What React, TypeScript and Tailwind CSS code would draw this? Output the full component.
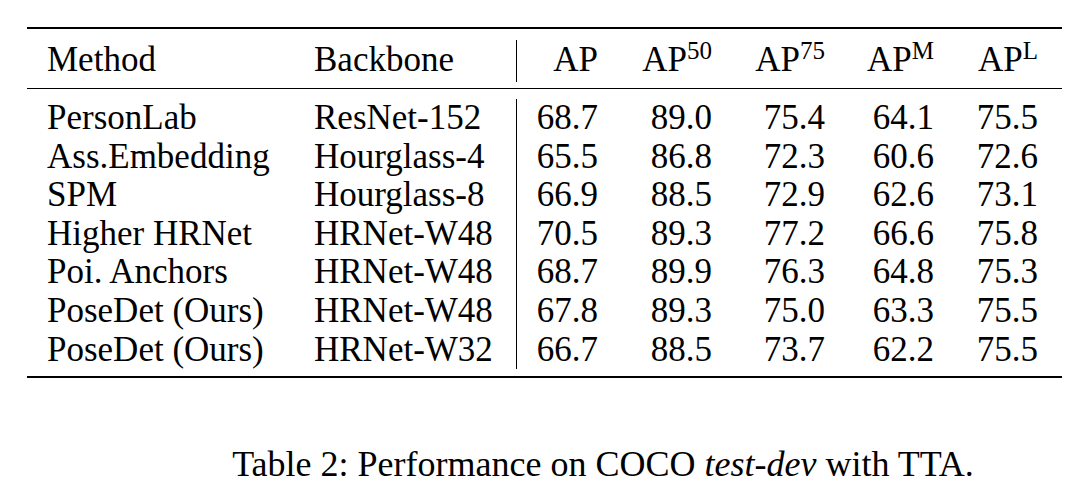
import React from 'react';

interface ResultRow {
  method: string;
  backbone: string;
  scores: string[];
}

const rows: ResultRow[] = [
  { method: 'PersonLab', backbone: 'ResNet-152', scores: ['68.7', '89.0', '75.4', '64.1', '75.5'] },
  { method: 'Ass.Embedding', backbone: 'Hourglass-4', scores: ['65.5', '86.8', '72.3', '60.6', '72.6'] },
  { method: 'SPM', backbone: 'Hourglass-8', scores: ['66.9', '88.5', '72.9', '62.6', '73.1'] },
  { method: 'Higher HRNet', backbone: 'HRNet-W48', scores: ['70.5', '89.3', '77.2', '66.6', '75.8'] },
  { method: 'Poi. Anchors', backbone: 'HRNet-W48', scores: ['68.7', '89.9', '76.3', '64.8', '75.3'] },
  { method: 'PoseDet (Ours)', backbone: 'HRNet-W48', scores: ['67.8', '89.3', '75.0', '63.3', '75.5'] },
  { method: 'PoseDet (Ours)', backbone: 'HRNet-W32', scores: ['66.7', '88.5', '73.7', '62.2', '75.5'] },
];

const headers: { base: string; sup?: string }[] = [
  { base: 'AP' },
  { base: 'AP', sup: '50' },
  { base: 'AP', sup: '75' },
  { base: 'AP', sup: 'M' },
  { base: 'AP', sup: 'L' },
];

// method | backbone | rule | AP | AP50 | AP75 | APM | APL | right margin
const cols = 'grid-cols-[267px_202px_1px_81px_114px_113px_109px_104px_24px]';

const App: React.FC = () => {
  return (
    <div className="w-[1092px] min-h-[486px] bg-white text-black font-['Liberation_Serif','Times_New_Roman',serif] text-[35px]">
      <div className="pt-[27px] pl-[27px]">
        <div className="w-[1035px]">
          <div className="h-[2px] bg-black" />

          <div className={`grid ${cols} pl-[20px] mt-[11px] h-[42px]`}>
            <div className="leading-[39px]">Method</div>
            <div className="leading-[39px]">Backbone</div>
            <div className="bg-black" />
            {headers.map((h, i) => (
              <div key={i} className="leading-[39px] text-right">
                {h.base}
                {h.sup && <sup className="text-[25px]">{h.sup}</sup>}
              </div>
            ))}
            <div />
          </div>

          <div className="mt-[6px] h-px bg-black" />

          <div className={`grid ${cols} grid-rows-[repeat(7,38.6px)] pl-[20px] mt-[10px]`}>
            <div className="col-start-3 row-start-1 row-span-7 bg-black" />
            {rows.map((r, i) => (
              <React.Fragment key={i}>
                <div className="col-start-1 leading-[38.6px] whitespace-nowrap">{r.method}</div>
                <div className="col-start-2 leading-[38.6px] whitespace-nowrap">{r.backbone}</div>
                {r.scores.map((s, j) => (
                  <div key={j} className="leading-[38.6px] text-right">{s}</div>
                ))}
                <div />
              </React.Fragment>
            ))}
          </div>

          <div className="mt-[7px] h-[2px] bg-black" />
        </div>
      </div>

      <p className="mt-[66px] pl-[114px] text-center text-[36px] leading-[40px]">
        Table 2: Performance on COCO <i>test-dev</i> with TTA.
      </p>
    </div>
  );
};

export default App;
